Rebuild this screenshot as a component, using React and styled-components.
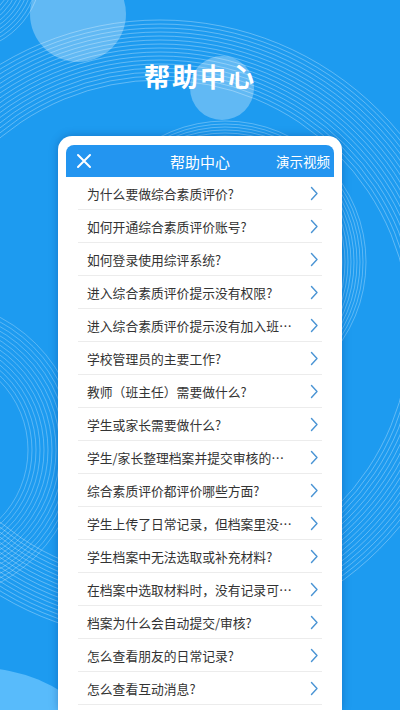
import React from "react";
import styled, { createGlobalStyle } from "styled-components";

const Global = createGlobalStyle`
  html, body { margin: 0; padding: 0; }
  body {
    width: 400px; height: 710px; overflow: hidden;
    background: #1d9bf0;
    font-family: "Noto Sans CJK SC", "Noto Sans", sans-serif;
  }
`;

const Page = styled.div`
  position: relative;
  width: 400px;
  height: 710px;
  overflow: hidden;
  background: #1d9bf0;
  display: flex;
  flex-direction: column;
  align-items: center;
`;

const Decor = styled.svg`
  position: absolute;
  left: 0;
  top: 0;
  pointer-events: none;
`;

const Title = styled.h1`
  position: relative;
  margin: 58px 0 0;
  height: 36px;
  line-height: 36px;
  font-size: 26px;
  font-weight: 700;
  letter-spacing: 2px;
  color: #ffffff;
`;

const Card = styled.div`
  position: relative;
  margin-top: 42px;
  width: 284px;
  flex: 1;
  box-sizing: border-box;
  padding: 9px 8px 0;
  background: #ffffff;
  border-radius: 14px 14px 0 0;
  box-shadow: 0 0 8px rgba(0, 50, 120, 0.35);
`;

const Header = styled.div`
  height: 32px;
  background: #2395f0;
  border-radius: 8px 8px 0 0;
  display: grid;
  grid-template-columns: 72px 1fr 72px;
  align-items: center;
  color: #fff;
`;

const CloseBtn = styled.div`
  display: flex;
  align-items: center;
  padding-left: 10px;
`;

const HeaderTitle = styled.div`
  text-align: center;
  font-size: 15px;
`;

const HeaderLink = styled.div`
  text-align: right;
  font-size: 13.5px;
  white-space: nowrap;
  padding-right: 4px;
`;

const List = styled.ul`
  list-style: none;
  margin: 0 12px;
  padding: 0;
`;

const Row = styled.li`
  height: 33px;
  box-sizing: border-box;
  border-bottom: 1px solid #ececec;
  display: flex;
  align-items: center;
  justify-content: space-between;
  padding: 1px 3px 0 9px;
`;

const RowText = styled.span`
  font-size: 12.8px;
  color: #333333;
  white-space: nowrap;
`;

const Chevron = () => (
  <svg width="9" height="15" viewBox="0 0 9 15">
    <polyline points="1.5,1.5 7,7.5 1.5,13.5" fill="none" stroke="#4a94d4" strokeWidth="1.4" strokeLinecap="round" strokeLinejoin="round" />
  </svg>
);

const items = [
  "为什么要做综合素质评价?",
  "如何开通综合素质评价账号?",
  "如何登录使用综评系统?",
  "进入综合素质评价提示没有权限?",
  "进入综合素质评价提示没有加入班…",
  "学校管理员的主要工作?",
  "教师（班主任）需要做什么?",
  "学生或家长需要做什么?",
  "学生/家长整理档案并提交审核的…",
  "综合素质评价都评价哪些方面?",
  "学生上传了日常记录，但档案里没…",
  "学生档案中无法选取或补充材料?",
  "在档案中选取材料时，没有记录可…",
  "档案为什么会自动提交/审核?",
  "怎么查看朋友的日常记录?",
  "怎么查看互动消息?",
];

const rings = (cx, cy, r0, n, step, op) =>
  Array.from({ length: n }, (_, i) => (
    <circle key={`${cx}-${cy}-${i}`} cx={cx} cy={cy} r={r0 + i * step} fill="none" stroke="#ffffff" strokeOpacity={op} strokeWidth="0.9" />
  ));

export default function App() {
  return (
    <>
      <Global />
      <Page>
        <Decor width="400" height="710" viewBox="0 0 400 710">
          <circle cx="-20" cy="820" r="152" fill="#6cc6ff" fillOpacity="0.75" />
          <circle cx="78" cy="14" r="48" fill="#ffffff" fillOpacity="0.3" />
          <circle cx="222" cy="88" r="32" fill="#ffffff" fillOpacity="0.3" />
          {rings(225, 262, 108, 12, 3, 0.32)}
          {rings(160, 330, 250, 16, 4, 0.34)}
          {rings(-70, 450, 98, 14, 4, 0.3)}
          {rings(-40, -30, 50, 10, 3.5, 0.32)}
        </Decor>
        <Title>帮助中心</Title>
        <Card>
          <Header>
            <CloseBtn>
              <svg width="16" height="16" viewBox="0 0 16 16">
                <path d="M2 2 L14 14 M14 2 L2 14" stroke="#fff" strokeWidth="2" strokeLinecap="round" />
              </svg>
            </CloseBtn>
            <HeaderTitle>帮助中心</HeaderTitle>
            <HeaderLink>演示视频</HeaderLink>
          </Header>
          <List>
            {items.map((t) => (
              <Row key={t}>
                <RowText>{t}</RowText>
                <Chevron />
              </Row>
            ))}
          </List>
        </Card>
      </Page>
    </>
  );
}
